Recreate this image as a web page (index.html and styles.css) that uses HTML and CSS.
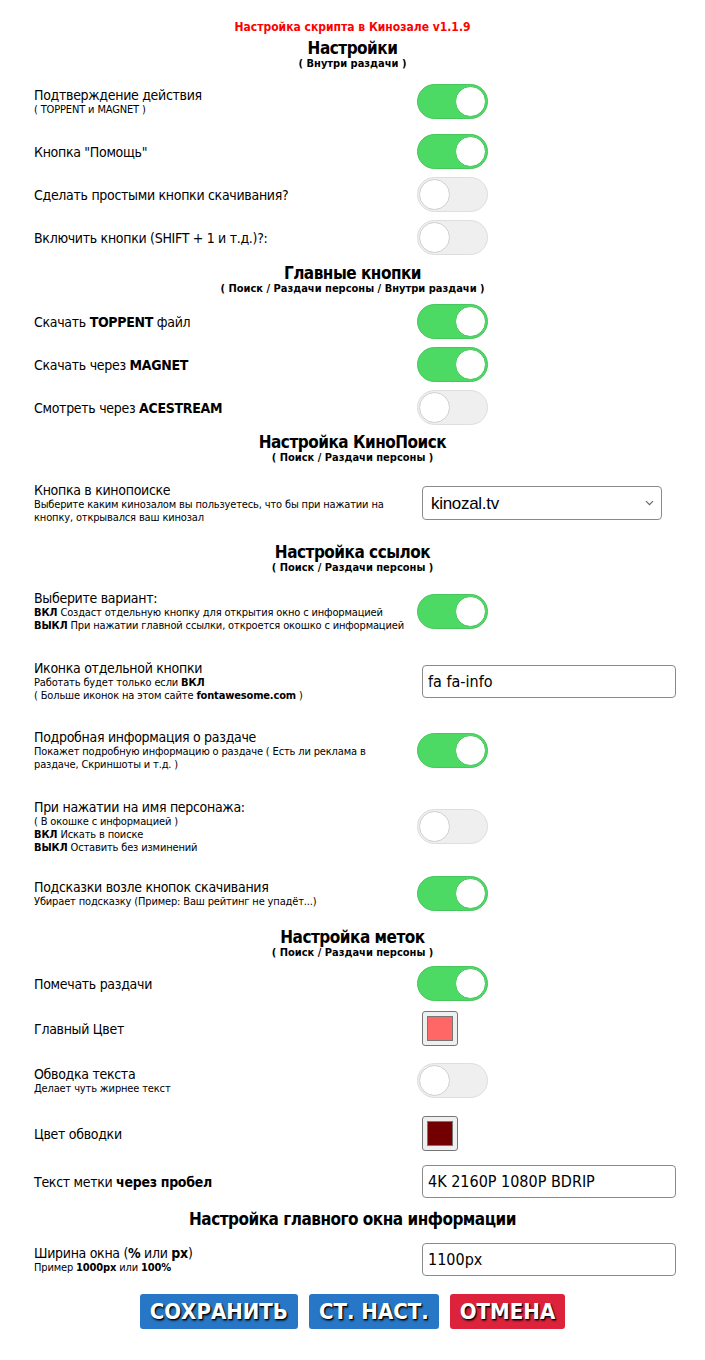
FILE: index.html
```html
<!DOCTYPE html>
<html lang="ru">
<head>
<meta charset="utf-8">
<title>Настройка скрипта в Кинозале</title>
<link rel="stylesheet" href="styles.css">
</head>
<body>
<div class="panel">
  <div class="title">Настройка скрипта в Кинозале v1.1.9</div>

  <div class="head"><div class="h">Настройки</div><div class="hs">( Внутри раздачи )</div></div>

  <div class="row mt15">
    <div class="lbl"><div class="main">Подтверждение действия</div><div class="sub">( TOPPENT и MAGNET )</div></div>
    <span class="toggle on"><span class="knob"></span></span>
  </div>
  <div class="row mt15">
    <div class="lbl"><div class="main">Кнопка "Помощь"</div></div>
    <span class="toggle on"><span class="knob"></span></span>
  </div>
  <div class="row mt8">
    <div class="lbl"><div class="main">Сделать простыми кнопки скачивания?</div></div>
    <span class="toggle"><span class="knob"></span></span>
  </div>
  <div class="row mt8">
    <div class="lbl"><div class="main">Включить кнопки (SHIFT + 1 и т.д.)?:</div></div>
    <span class="toggle"><span class="knob"></span></span>
  </div>

  <div class="head mt8"><div class="h">Главные кнопки</div><div class="hs">( Поиск / Раздачи персоны / Внутри раздачи )</div></div>

  <div class="row mt10">
    <div class="lbl"><div class="main">Скачать <b>TOPPENT</b> файл</div></div>
    <span class="toggle on"><span class="knob"></span></span>
  </div>
  <div class="row mt8">
    <div class="lbl"><div class="main">Скачать через <b>MAGNET</b></div></div>
    <span class="toggle on"><span class="knob"></span></span>
  </div>
  <div class="row mt8">
    <div class="lbl"><div class="main">Смотреть через <b>ACESTREAM</b></div></div>
    <span class="toggle"><span class="knob"></span></span>
  </div>

  <div class="head mt7"><div class="h">Настройка КиноПоиск</div><div class="hs">( Поиск / Раздачи персоны )</div></div>

  <div class="row mt19">
    <div class="lbl"><div class="main">Кнопка в кинопоиске</div><div class="sub">Выберите каким кинозалом вы пользуетесь, что бы при нажатии на кнопку, открывался ваш кинозал</div></div>
    <div class="select-wrap">
      <select class="select"><option>kinozal.tv</option><option>kinozal.me</option><option>kinozal.guru</option></select>
      <svg class="chev" width="9" height="6" viewBox="0 0 9 6"><path d="M1 1.2l3.5 3.5 3.5-3.5" fill="none" stroke="#666" stroke-width="1.2"/></svg>
    </div>
  </div>

  <div class="head mt18"><div class="h">Настройка ссылок</div><div class="hs">( Поиск / Раздачи персоны )</div></div>

  <div class="row mt17">
    <div class="lbl"><div class="main">Выберите вариант:</div><div class="sub nowrap"><b>ВКЛ</b> Создаст отдельную кнопку для открытия окно с информацией</div><div class="sub nowrap"><b>ВЫКЛ</b> При нажатии главной ссылки, откроется окошко с информацией</div></div>
    <span class="toggle on"><span class="knob"></span></span>
  </div>
  <div class="row mt28">
    <div class="lbl"><div class="main">Иконка отдельной кнопки</div><div class="sub">Работать будет только если <b>ВКЛ</b></div><div class="sub">( Больше иконок на этом сайте <b>fontawesome.com</b> )</div></div>
    <input class="text" type="text" value="fa fa-info">
  </div>
  <div class="row mt27">
    <div class="lbl"><div class="main">Подробная информация о раздаче</div><div class="sub">Покажет подробную информацию о раздаче ( Есть ли реклама в раздаче, Скриншоты и т.д. )</div></div>
    <span class="toggle on"><span class="knob"></span></span>
  </div>
  <div class="row mt28">
    <div class="lbl"><div class="main">При нажатии на имя персонажа:</div><div class="sub">( В окошке с информацией )</div><div class="sub"><b>ВКЛ</b> Искать в поиске</div><div class="sub"><b>ВЫКЛ</b> Оставить без изминений</div></div>
    <span class="toggle"><span class="knob"></span></span>
  </div>
  <div class="row mt22">
    <div class="lbl"><div class="main">Подсказки возле кнопок скачивания</div><div class="sub">Убирает подсказку (Пример: Ваш рейтинг не упадёт...)</div></div>
    <span class="toggle on"><span class="knob"></span></span>
  </div>

  <div class="head mt16"><div class="h">Настройка меток</div><div class="hs">( Поиск / Раздачи персоны )</div></div>

  <div class="row mt8">
    <div class="lbl"><div class="main">Помечать раздачи</div></div>
    <span class="toggle on"><span class="knob"></span></span>
  </div>
  <div class="row mt10">
    <div class="lbl"><div class="main">Главный Цвет</div></div>
    <span class="swatch"><span class="swatch-fill" style="background:#ff6666"></span></span>
  </div>
  <div class="row mt17">
    <div class="lbl"><div class="main">Обводка текста</div><div class="sub">Делает чуть жирнее текст</div></div>
    <span class="toggle"><span class="knob"></span></span>
  </div>
  <div class="row mt18">
    <div class="lbl"><div class="main">Цвет обводки</div></div>
    <span class="swatch"><span class="swatch-fill" style="background:#720000"></span></span>
  </div>
  <div class="row mt14">
    <div class="lbl"><div class="main">Текст метки <b>через пробел</b></div></div>
    <input class="text" type="text" value="4K 2160P 1080P BDRIP">
  </div>

  <div class="head mt11"><div class="h">Настройка главного окна информации</div></div>

  <div class="row mt14">
    <div class="lbl"><div class="main">Ширина окна (<b>%</b> или <b>px</b>)</div><div class="sub">Пример <b>1000px</b> или <b>100%</b></div></div>
    <input class="text" type="text" value="1100px">
  </div>

  <div class="buttons">
    <button class="btn blue">СОХРАНИТЬ</button>
    <button class="btn blue">СТ. НАСТ.</button>
    <button class="btn red">ОТМЕНА</button>
  </div>
</div>
</body>
</html>
```

FILE: styles.css
```css
html, body {
  margin: 0;
  padding: 0;
  background: #fff;
}
body {
  font-family: "DejaVu Sans Condensed", "DejaVu Sans", sans-serif;
  color: #000;
}
.panel {
  width: 705px;
  padding: 20px 0 30px 34px;
  box-sizing: border-box;
}
.title {
  text-align: center;
  margin-left: -34px;
  color: #ff0000;
  font-weight: bold;
  font-size: 12px;
  line-height: 14px;
}
.head {
  margin-left: -34px;
  text-align: center;
  margin-top: 4px;
  padding-top: 1px;
}
.h {
  font-size: 17px;
  line-height: 19px;
  font-weight: bold;
  letter-spacing: -0.5px;
}
.hs {
  font-size: 11px;
  line-height: 11px;
  font-weight: bold;
}
.row {
  display: grid;
  grid-template-columns: 383px auto;
  align-items: center;
}
.lbl {
  max-width: 370px;
}
.lbl .main {
  font-size: 14px;
  line-height: 16px;
  letter-spacing: -0.3px;
}
.lbl .sub {
  font-size: 11px;
  line-height: 13px;
  letter-spacing: -0.15px;
}
.lbl .nowrap { white-space: nowrap; }

.mt7 { margin-top: 7px; }
.mt8 { margin-top: 8px; }
.mt10 { margin-top: 10px; }
.mt11 { margin-top: 11px; }
.mt14 { margin-top: 14px; }
.mt15 { margin-top: 15px; }
.mt16 { margin-top: 16px; }
.mt17 { margin-top: 17px; }
.mt18 { margin-top: 18px; }
.mt19 { margin-top: 19px; }
.mt22 { margin-top: 22px; }
.mt27 { margin-top: 27px; }
.mt28 { margin-top: 28px; }

.toggle {
  width: 71px;
  height: 35px;
  box-sizing: border-box;
  border-radius: 18px;
  background: #efefef;
  border: 1px solid #dedede;
  display: flex;
  align-items: center;
  justify-content: flex-start;
  padding: 0 1px;
}
.toggle .knob {
  width: 31px;
  height: 31px;
  box-sizing: border-box;
  border-radius: 50%;
  background: #fff;
  border: 1px solid #d0d0d0;
}
.toggle.on {
  background: #4cd964;
  border-color: #45c75b;
  justify-content: flex-end;
}
.toggle.on .knob {
  border-color: #45c75b;
}

.select-wrap {
  position: relative;
  margin-left: 5px;
  width: 240px;
  height: 34px;
}
.select {
  appearance: none;
  -webkit-appearance: none;
  width: 240px;
  height: 34px;
  box-sizing: border-box;
  border: 1px solid #8a8a8a;
  border-radius: 4px;
  background: #fff;
  font-family: "Liberation Sans", Arial, sans-serif;
  font-size: 17px;
  letter-spacing: -0.3px;
  padding: 0 8px;
  color: #000;
}
.chev {
  position: absolute;
  right: 8px;
  top: 14px;
}

.text {
  margin-left: 5px;
  width: 254px;
  height: 33px;
  box-sizing: border-box;
  border: 1px solid #8a8a8a;
  border-radius: 4px;
  font-family: "DejaVu Sans Condensed", "DejaVu Sans", sans-serif;
  font-size: 16px;
  padding: 0 5px;
  color: #000;
}

.swatch {
  margin-left: 5px;
  width: 36px;
  height: 35px;
  box-sizing: border-box;
  border: 1px solid #767676;
  border-radius: 3px;
  background: #efefef;
  display: flex;
  align-items: center;
  justify-content: center;
}
.swatch-fill {
  width: 26px;
  height: 25px;
  box-sizing: border-box;
  border: 1px solid #777;
}

.buttons {
  margin-left: -34px;
  margin-top: 18px;
  display: flex;
  justify-content: center;
  gap: 11px;
}
.btn {
  height: 35px;
  border: 0;
  border-radius: 3px;
  padding: 0 10px;
  color: #fff;
  font-family: "DejaVu Sans Condensed", "DejaVu Sans", sans-serif;
  font-size: 22px;
  font-weight: bold;
  text-shadow: 1px 1px 1px #000, 1px 2px 2px rgba(0,0,0,0.6);
}
.btn.blue { background: #2777c6; }
.btn.red { background: #dc233b; }
```
